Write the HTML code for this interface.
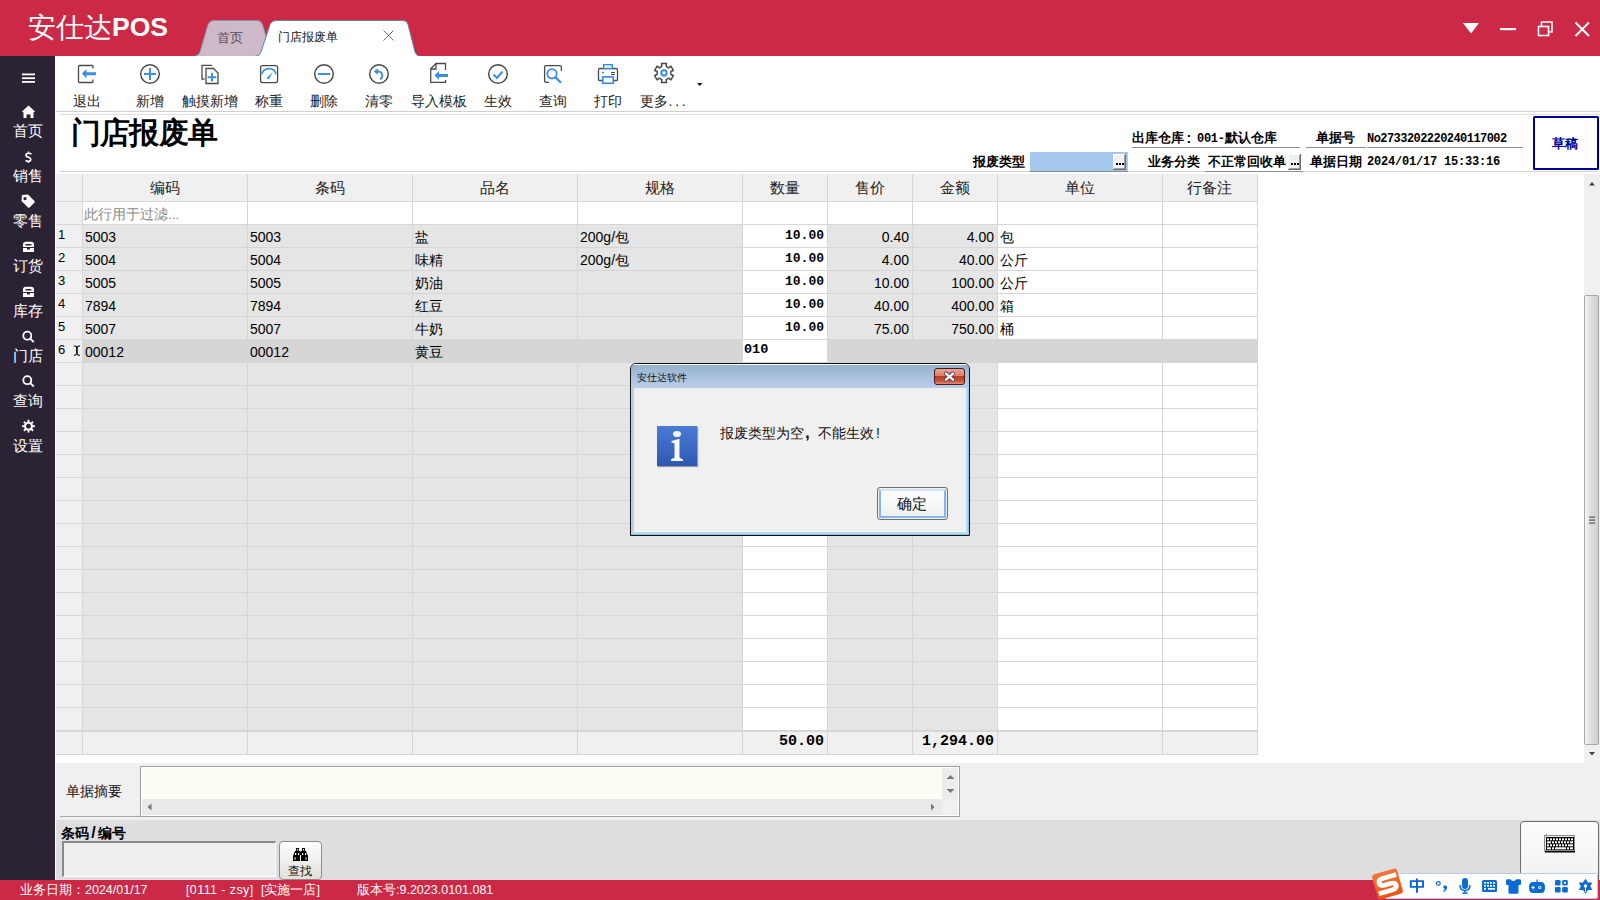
<!DOCTYPE html>
<html><head><meta charset="utf-8">
<style>
*{box-sizing:border-box;margin:0;padding:0}
html,body{width:1600px;height:900px;overflow:hidden;background:#fff;font-family:"Liberation Sans",sans-serif;color:#000}
div,span,svg{position:absolute}
b{font-weight:bold}
.t{white-space:nowrap;line-height:1}
.sl{left:0;width:55px;text-align:center;color:#fff;font-size:15px;white-space:nowrap;line-height:1}
.tl{font-size:14px;white-space:nowrap;line-height:1;color:#222}
.hf{font-size:13px;font-weight:bold;white-space:nowrap;line-height:1}
.mono{font-family:"Liberation Mono",monospace}
.cell{font-size:14px;line-height:1;white-space:nowrap}
</style></head><body>

<div style="left:0;top:0;width:1600px;height:56px;background:#cc2946"></div>
<div class="t" style="left:28px;top:14px;color:#fff;font-size:28px;font-family:'Liberation Serif',serif">安仕达</div>
<div class="t" style="left:112px;top:14px;color:#fff;font-size:26.5px;font-weight:bold">POS</div>
<svg style="left:0;top:0" width="600" height="56" viewBox="0 0 600 56">
<path d="M194,56.5 Q198.5,56 200,52 L208,24.5 Q209.5,20.5 214,20.5 L257,20.5 Q261.5,20.5 262.5,24.5 L272,56.5 Z" fill="#cdb9c8" stroke="#7f96b3" stroke-width="1"/>
<path d="M255,56.5 Q259.5,56 261,52 L270,24.5 Q271.5,20.5 276,20.5 L403,20.5 Q407,20.5 408,24.5 L415,52 Q416.5,56 420,56.5 Z" fill="#fff" stroke="#5f86a8" stroke-width="1"/>
<path d="M383.5,30.5 L393.5,40.5 M393.5,30.5 L383.5,40.5" stroke="#5a5a5a" stroke-width="0.9"/>
</svg>
<div class="t" style="left:217px;top:31px;font-size:13px;color:#5b4b57">首页</div>
<div class="t" style="left:278px;top:31px;font-size:12px;color:#111">门店报废单</div>
<svg style="left:1450px;top:10px" width="150" height="40" viewBox="1450 10 150 40">
<path d="M1463,23 L1479,23 L1471,33.5 Z" fill="#fff"/>
<rect x="1500" y="28" width="16" height="2.2" fill="#fff"/>
<rect x="1538.5" y="26.5" width="10" height="9" fill="none" stroke="#fff" stroke-width="1.6"/>
<path d="M1541.5,26 L1541.5,22 L1552,22 L1552,32 L1548.5,32" fill="none" stroke="#fff" stroke-width="1.6"/>
<path d="M1575.5,22.5 L1589,36 M1589,22.5 L1575.5,36" stroke="#fff" stroke-width="2"/>
</svg>
<div style="left:0;top:56px;width:55px;height:824px;background:#2b2334"></div>
<svg style="left:0;top:56px" width="55" height="400" viewBox="0 56 55 400">
<g fill="#fff">
<rect x="22" y="73.5" width="13" height="1.8"/><rect x="22" y="77.3" width="13" height="1.8"/><rect x="22" y="81" width="13" height="1.8"/>
<path d="M28.5,105.5 L35,111.5 L33.5,112.5 L33.5,118 L30.5,118 L30.5,114.5 L26.5,114.5 L26.5,118 L23.5,118 L23.5,112.5 L22,111.5 Z"/>
</g>
<g fill="none" stroke="#fff">
<path d="M31.5,154 Q28.5,152.5 26.5,154 Q25,156 28,157 Q31.5,158 30.5,160.5 Q28.5,162 25.5,160.5" stroke-width="1.7"/>
<path d="M28.5,151.5 L28.5,153 M28.5,161 L28.5,163" stroke-width="1.4"/>
</g>
<g fill="#fff">
<path d="M22,196.5 L28,196 L34.5,202.5 Q35,203.5 34.5,204 L29.5,209 Q28.5,209.5 28,209 L21.5,202.5 Z M25,198.5 A1.6,1.6 0 1 0 25.01,198.5 Z" fill-rule="evenodd" transform="translate(0,-1.5)"/>
</g>
<g fill="#fff">
<path d="M23,247 L23,244.5 Q23,241.8 26,241.8 L31,241.8 Q34,241.8 34,244.5 L34,247 Z M25.5,244 L25.5,245.5 L31.5,245.5 L31.5,244 Z" fill-rule="evenodd"/>
<path d="M23,248 L27,248 L27,249.5 L30,249.5 L30,248 L34,248 L34,252 L23,252 Z"/>
<path d="M23,292 L23,289.5 Q23,286.8 26,286.8 L31,286.8 Q34,286.8 34,289.5 L34,292 Z M25.5,289 L25.5,290.5 L31.5,290.5 L31.5,289 Z" fill-rule="evenodd"/>
<path d="M23,293 L27,293 L27,294.5 L30,294.5 L30,293 L34,293 L34,297 L23,297 Z"/>
</g>
<g fill="none" stroke="#fff" stroke-width="1.8">
<circle cx="27.3" cy="335.7" r="4"/><path d="M30.2,338.6 L33.8,342"/>
<circle cx="27.3" cy="380.2" r="4"/><path d="M30.2,383.1 L33.8,386.5"/>
</g>
</svg>
<svg style="left:0;top:400px" width="55" height="50" viewBox="0 400 55 50"><path d="M33.01,425.30 L34.92,425.18 L34.92,427.22 L33.01,427.10 L32.32,428.76 L33.76,430.02 L32.32,431.46 L31.06,430.02 L29.40,430.71 L29.52,432.62 L27.48,432.62 L27.60,430.71 L25.94,430.02 L24.68,431.46 L23.24,430.02 L24.68,428.76 L23.99,427.10 L22.08,427.22 L22.08,425.18 L23.99,425.30 L24.68,423.64 L23.24,422.38 L24.68,420.94 L25.94,422.38 L27.60,421.69 L27.48,419.78 L29.52,419.78 L29.40,421.69 L31.06,422.38 L32.32,420.94 L33.76,422.38 L32.32,423.64 Z M31,426.2 A2.5,2.5 0 1 0 31,426.21 Z" fill="#fff" fill-rule="evenodd"/></svg>
<div class="sl" style="top:123px">首页</div>
<div class="sl" style="top:168px">销售</div>
<div class="sl" style="top:213px">零售</div>
<div class="sl" style="top:258px">订货</div>
<div class="sl" style="top:303px">库存</div>
<div class="sl" style="top:348px">门店</div>
<div class="sl" style="top:393px">查询</div>
<div class="sl" style="top:438px">设置</div>
<div class="tl" style="left:87.1px;top:94px;transform:translateX(-50%)">退出</div>
<div class="tl" style="left:149.5px;top:94px;transform:translateX(-50%)">新增</div>
<div class="tl" style="left:209.7px;top:94px;transform:translateX(-50%)">触摸新增</div>
<div class="tl" style="left:268.7px;top:94px;transform:translateX(-50%)">称重</div>
<div class="tl" style="left:323.9px;top:94px;transform:translateX(-50%)">删除</div>
<div class="tl" style="left:379.0px;top:94px;transform:translateX(-50%)">清零</div>
<div class="tl" style="left:438.8px;top:94px;transform:translateX(-50%)">导入模板</div>
<div class="tl" style="left:498.0px;top:94px;transform:translateX(-50%)">生效</div>
<div class="tl" style="left:553.1px;top:94px;transform:translateX(-50%)">查询</div>
<div class="tl" style="left:608.0px;top:94px;transform:translateX(-50%)">打印</div>
<div class="tl" style="left:664.5px;top:94px;transform:translateX(-50%)">更多<span style="position:static;letter-spacing:2.8px">...</span></div>
<svg style="left:0;top:0" width="720" height="112" viewBox="0 0 720 112">
<g fill="none" stroke="#4a4a4a" stroke-width="1.3">
<!-- 退出 -->
<path d="M93,68.5 L93,66.5 Q93,65.5 92,65.5 L79.5,65.5 Q78.5,65.5 78.5,66.5 L78.5,81.5 Q78.5,82.5 79.5,82.5 L92,82.5 Q93,82.5 93,81.5 L93,79.5"/>
<!-- 新增 -->
<circle cx="150" cy="74" r="9.3" stroke-width="1.45"/>
<!-- 触摸新增 -->
<path d="M211.5,66 L211.5,65.3 L202,65.3 L202,79 L204.5,79"/>
<path d="M206,68.5 L213.5,68.5 L218,73 L218,83.5 L206,83.5 Z"/>
<!-- 称重 -->
<rect x="260.6" y="65.6" width="17" height="17" rx="2"/>
<!-- 删除 -->
<circle cx="324" cy="74" r="9.3" stroke-width="1.45"/>
<!-- 清零 -->
<circle cx="379" cy="74" r="9.3" stroke-width="1.45"/>
<!-- 导入模板 -->
<path d="M445.5,70 L445.5,63.5 L436,63.5 L430.7,68.8 L430.7,82.3 L445.5,82.3 L445.5,80"/>
<path d="M436,63.5 L436,69 L430.7,69" />
<!-- 生效 -->
<circle cx="498" cy="74" r="9.3" stroke-width="1.45"/>
<!-- 查询 -->
<path d="M561.4,71 L561.4,67 Q561.4,65.6 560,65.6 L546,65.6 Q544.6,65.6 544.6,67 L544.6,81 Q544.6,82.4 546,82.4 L549,82.4"/>
<!-- 打印 -->
<rect x="598.5" y="68.5" width="19" height="12" rx="1.2"/>
<path d="M611,72.5 L615,72.5 M611,74.5 L615,74.5" stroke-width="1"/>
<!-- gear -->
<path d="M661.84,66.34 L661.53,63.62 L666.47,63.62 L666.16,66.34 L668.68,67.80 L670.89,66.17 L673.36,70.45 L670.85,71.54 L670.85,74.46 L673.36,75.55 L670.89,79.83 L668.68,78.20 L666.16,79.66 L666.47,82.38 L661.53,82.38 L661.84,79.66 L659.32,78.20 L657.11,79.83 L654.64,75.55 L657.15,74.46 L657.15,71.54 L654.64,70.45 L657.11,66.17 L659.32,67.80 Z" stroke-width="1.5" stroke-linejoin="round"/>
</g>
<g fill="#3a8ee4" stroke="none">
<!-- 退出 arrow -->
<path d="M82,73.5 L86.5,69 L86.5,72.2 L96,72.2 L96,75.3 L86.5,75.3 L86.5,78.5 Z"/>
<!-- 新增 plus -->
<rect x="144" y="73" width="12" height="2"/><rect x="149" y="68" width="2" height="12"/>
<!-- 触摸新增 plus -->
<rect x="207.7" y="76.2" width="8.6" height="2"/><rect x="211" y="72.8" width="2" height="8.6"/>
<!-- 删除 minus -->
<rect x="318" y="73" width="12" height="2"/>
<!-- 导入模板 arrow -->
<path d="M434.5,75.3 L439,71 L439,74 L448,74 L448,77 L439,77 L439,80 Z"/>
<!-- 打印 papers -->
<rect x="603.7" y="64.7" width="8.6" height="3.8" fill="#fff" stroke="#3a8ee4" stroke-width="1.5"/>
<rect x="602.8" y="76.9" width="10.4" height="6.4" fill="#fff" stroke="#3a8ee4" stroke-width="1.7"/>
<path d="M602,72.5 L603,71.5 L604,72.5 L603,73.5 Z" fill="#4a4a4a"/>
</g>
<g fill="none" stroke="#3a8ee4">
<!-- 称重 gauge -->
<path d="M261.9,74.2 A7.3,7.3 0 0 1 276.1,74.2" stroke-width="1.6"/>
<!-- 清零 undo -->
<path d="M376.5,71.5 Q382,71 382.3,75.5 Q382.3,77.5 380.3,79.5" stroke-width="1.9"/>
<!-- 生效 check -->
<path d="M493.5,74.5 L497,78 L502.5,71.5" stroke-width="2"/>
<!-- 查询 magnifier -->
<circle cx="552" cy="73.8" r="4.7" stroke-width="1.8"/>
<path d="M555.5,77.3 L561,82.8" stroke-width="2.2"/>
<!-- gear center -->
<circle cx="664" cy="73" r="2.7" stroke-width="2"/>
</g>
<path d="M373.8,71.5 L377.8,68.2 L377.8,74.8 Z" fill="#3a8ee4"/>
<path d="M266.6,78.2 L268.8,79.4 L272.8,71.8 Z" fill="#3a8ee4"/>
<path d="M697,83 L702.5,83 L699.75,86 Z" fill="#111"/>
</svg>

<div style="left:56px;top:111px;width:1544px;height:1px;background:#cfcfcf"></div>
<div style="left:59px;top:114px;width:1541px;height:1px;background:#dedede"></div>
<div class="t" style="left:70.5px;top:117.5px;font-size:30px;letter-spacing:-0.6px;font-weight:bold;font-family:'Liberation Serif',serif">门店报废单</div>
<div style="left:59px;top:171px;width:1539px;height:1px;background:#d4d4d4"></div>
<div class="hf" style="left:1132px;top:131px">出库仓库</div>
<div class="hf" style="left:1186.5px;top:131px;font-size:14px">:</div>
<div class="hf mono" style="left:1197px;top:133px;font-size:12px;letter-spacing:-0.3px">001-</div>
<div class="hf" style="left:1225px;top:131px">默认仓库</div>
<div style="left:1132px;top:147px;width:168px;height:1px;background:#8c8c8c"></div>
<div class="hf" style="left:1316px;top:131px">单据号</div>
<div style="left:1306px;top:147px;width:60px;height:1px;background:#8c8c8c"></div>
<div class="hf mono" style="left:1367px;top:133px;font-size:12px;letter-spacing:-0.55px">No2733202220240117002</div>
<div style="left:1367px;top:147px;width:156px;height:1px;background:#8c8c8c"></div>
<div class="hf" style="left:973px;top:155px">报废类型</div>
<div style="left:1030px;top:152px;width:98px;height:19px;background:#a7c8ee"></div>
<svg style="left:1113px;top:154px" width="13" height="16" viewBox="0 0 13 16"><rect x="0" y="0" width="13" height="16" fill="#6a6a6a"/><rect x="0" y="0" width="12" height="15" fill="#fff"/><rect x="1" y="1" width="11" height="14" fill="#a0a0a0"/><rect x="1" y="1" width="10" height="13" fill="#f0f0f0"/><rect x="3" y="9" width="2" height="2" fill="#000"/><rect x="6" y="9" width="2" height="2" fill="#000"/><rect x="9" y="9" width="2" height="2" fill="#000"/></svg>
<div style="left:1030px;top:171px;width:98px;height:1px;background:#8a8a8a"></div>
<div class="hf" style="left:1148px;top:155px">业务分类</div>
<div class="hf" style="left:1208px;top:155px">不正常回收单</div>
<div style="left:1205px;top:171px;width:98px;height:1px;background:#8c8c8c"></div>
<svg style="left:1288px;top:154px" width="13" height="16" viewBox="0 0 13 16"><rect x="0" y="0" width="13" height="16" fill="#6a6a6a"/><rect x="0" y="0" width="12" height="15" fill="#fff"/><rect x="1" y="1" width="11" height="14" fill="#a0a0a0"/><rect x="1" y="1" width="10" height="13" fill="#f0f0f0"/><rect x="3" y="9" width="2" height="2" fill="#000"/><rect x="6" y="9" width="2" height="2" fill="#000"/><rect x="9" y="9" width="2" height="2" fill="#000"/></svg>
<div class="hf" style="left:1310px;top:155px">单据日期</div>
<div class="hf mono" style="left:1367px;top:156px;font-size:12px;letter-spacing:-0.2px">2024/01/17 15:33:16</div>
<div style="left:1533px;top:116px;width:66px;height:54px;border:2.5px solid #00009a;border-radius:1.5px"></div>
<div class="t" style="left:1552px;top:137px;font-size:13px;font-weight:bold;color:#00009a">草稿</div>
<div style="left:56px;top:174px;width:26px;height:27px;background:#f0f0f0"></div>
<div style="left:82px;top:174px;width:165px;height:27px;background:#f0f0f0"></div>
<div style="left:247px;top:174px;width:165px;height:27px;background:#f0f0f0"></div>
<div style="left:412px;top:174px;width:165px;height:27px;background:#f0f0f0"></div>
<div style="left:577px;top:174px;width:165px;height:27px;background:#f0f0f0"></div>
<div style="left:742px;top:174px;width:85px;height:27px;background:#f0f0f0"></div>
<div style="left:827px;top:174px;width:85px;height:27px;background:#f0f0f0"></div>
<div style="left:912px;top:174px;width:85px;height:27px;background:#f0f0f0"></div>
<div style="left:997px;top:174px;width:165px;height:27px;background:#f0f0f0"></div>
<div style="left:1162px;top:174px;width:95px;height:27px;background:#f0f0f0"></div>
<div style="left:56px;top:202px;width:26px;height:22px;background:#f0f0f0"></div>
<div style="left:83px;top:202px;width:1174px;height:22px;background:#fff"></div>
<div style="left:56px;top:225px;width:26px;height:22px;background:#f0f0f0"></div>
<div style="left:83px;top:225px;width:164px;height:22px;background:#e5e5e5"></div>
<div style="left:248px;top:225px;width:164px;height:22px;background:#e5e5e5"></div>
<div style="left:413px;top:225px;width:164px;height:22px;background:#e5e5e5"></div>
<div style="left:578px;top:225px;width:164px;height:22px;background:#e5e5e5"></div>
<div style="left:743px;top:225px;width:84px;height:22px;background:#fff"></div>
<div style="left:828px;top:225px;width:84px;height:22px;background:#e5e5e5"></div>
<div style="left:913px;top:225px;width:84px;height:22px;background:#e5e5e5"></div>
<div style="left:998px;top:225px;width:164px;height:22px;background:#fff"></div>
<div style="left:1163px;top:225px;width:94px;height:22px;background:#fff"></div>
<div style="left:56px;top:248px;width:26px;height:22px;background:#f0f0f0"></div>
<div style="left:83px;top:248px;width:164px;height:22px;background:#e5e5e5"></div>
<div style="left:248px;top:248px;width:164px;height:22px;background:#e5e5e5"></div>
<div style="left:413px;top:248px;width:164px;height:22px;background:#e5e5e5"></div>
<div style="left:578px;top:248px;width:164px;height:22px;background:#e5e5e5"></div>
<div style="left:743px;top:248px;width:84px;height:22px;background:#fff"></div>
<div style="left:828px;top:248px;width:84px;height:22px;background:#e5e5e5"></div>
<div style="left:913px;top:248px;width:84px;height:22px;background:#e5e5e5"></div>
<div style="left:998px;top:248px;width:164px;height:22px;background:#fff"></div>
<div style="left:1163px;top:248px;width:94px;height:22px;background:#fff"></div>
<div style="left:56px;top:271px;width:26px;height:22px;background:#f0f0f0"></div>
<div style="left:83px;top:271px;width:164px;height:22px;background:#e5e5e5"></div>
<div style="left:248px;top:271px;width:164px;height:22px;background:#e5e5e5"></div>
<div style="left:413px;top:271px;width:164px;height:22px;background:#e5e5e5"></div>
<div style="left:578px;top:271px;width:164px;height:22px;background:#e5e5e5"></div>
<div style="left:743px;top:271px;width:84px;height:22px;background:#fff"></div>
<div style="left:828px;top:271px;width:84px;height:22px;background:#e5e5e5"></div>
<div style="left:913px;top:271px;width:84px;height:22px;background:#e5e5e5"></div>
<div style="left:998px;top:271px;width:164px;height:22px;background:#fff"></div>
<div style="left:1163px;top:271px;width:94px;height:22px;background:#fff"></div>
<div style="left:56px;top:294px;width:26px;height:22px;background:#f0f0f0"></div>
<div style="left:83px;top:294px;width:164px;height:22px;background:#e5e5e5"></div>
<div style="left:248px;top:294px;width:164px;height:22px;background:#e5e5e5"></div>
<div style="left:413px;top:294px;width:164px;height:22px;background:#e5e5e5"></div>
<div style="left:578px;top:294px;width:164px;height:22px;background:#e5e5e5"></div>
<div style="left:743px;top:294px;width:84px;height:22px;background:#fff"></div>
<div style="left:828px;top:294px;width:84px;height:22px;background:#e5e5e5"></div>
<div style="left:913px;top:294px;width:84px;height:22px;background:#e5e5e5"></div>
<div style="left:998px;top:294px;width:164px;height:22px;background:#fff"></div>
<div style="left:1163px;top:294px;width:94px;height:22px;background:#fff"></div>
<div style="left:56px;top:317px;width:26px;height:22px;background:#f0f0f0"></div>
<div style="left:83px;top:317px;width:164px;height:22px;background:#e5e5e5"></div>
<div style="left:248px;top:317px;width:164px;height:22px;background:#e5e5e5"></div>
<div style="left:413px;top:317px;width:164px;height:22px;background:#e5e5e5"></div>
<div style="left:578px;top:317px;width:164px;height:22px;background:#e5e5e5"></div>
<div style="left:743px;top:317px;width:84px;height:22px;background:#fff"></div>
<div style="left:828px;top:317px;width:84px;height:22px;background:#e5e5e5"></div>
<div style="left:913px;top:317px;width:84px;height:22px;background:#e5e5e5"></div>
<div style="left:998px;top:317px;width:164px;height:22px;background:#fff"></div>
<div style="left:1163px;top:317px;width:94px;height:22px;background:#fff"></div>
<div style="left:56px;top:340px;width:26px;height:22px;background:#f0f0f0"></div>
<div style="left:83px;top:340px;width:164px;height:22px;background:#d5d5d5"></div>
<div style="left:248px;top:340px;width:164px;height:22px;background:#d5d5d5"></div>
<div style="left:413px;top:340px;width:164px;height:22px;background:#d5d5d5"></div>
<div style="left:578px;top:340px;width:164px;height:22px;background:#d5d5d5"></div>
<div style="left:743px;top:340px;width:84px;height:22px;background:#fff"></div>
<div style="left:828px;top:340px;width:84px;height:22px;background:#d5d5d5"></div>
<div style="left:913px;top:340px;width:84px;height:22px;background:#d5d5d5"></div>
<div style="left:998px;top:340px;width:164px;height:22px;background:#d5d5d5"></div>
<div style="left:1163px;top:340px;width:94px;height:22px;background:#d5d5d5"></div>
<div style="left:56px;top:363px;width:26px;height:22px;background:#f0f0f0"></div>
<div style="left:83px;top:363px;width:164px;height:22px;background:#e5e5e5"></div>
<div style="left:248px;top:363px;width:164px;height:22px;background:#e5e5e5"></div>
<div style="left:413px;top:363px;width:164px;height:22px;background:#e5e5e5"></div>
<div style="left:578px;top:363px;width:164px;height:22px;background:#e5e5e5"></div>
<div style="left:743px;top:363px;width:84px;height:22px;background:#fff"></div>
<div style="left:828px;top:363px;width:84px;height:22px;background:#e5e5e5"></div>
<div style="left:913px;top:363px;width:84px;height:22px;background:#e5e5e5"></div>
<div style="left:998px;top:363px;width:164px;height:22px;background:#fff"></div>
<div style="left:1163px;top:363px;width:94px;height:22px;background:#fff"></div>
<div style="left:56px;top:386px;width:26px;height:22px;background:#f0f0f0"></div>
<div style="left:83px;top:386px;width:164px;height:22px;background:#e5e5e5"></div>
<div style="left:248px;top:386px;width:164px;height:22px;background:#e5e5e5"></div>
<div style="left:413px;top:386px;width:164px;height:22px;background:#e5e5e5"></div>
<div style="left:578px;top:386px;width:164px;height:22px;background:#e5e5e5"></div>
<div style="left:743px;top:386px;width:84px;height:22px;background:#fff"></div>
<div style="left:828px;top:386px;width:84px;height:22px;background:#e5e5e5"></div>
<div style="left:913px;top:386px;width:84px;height:22px;background:#e5e5e5"></div>
<div style="left:998px;top:386px;width:164px;height:22px;background:#fff"></div>
<div style="left:1163px;top:386px;width:94px;height:22px;background:#fff"></div>
<div style="left:56px;top:409px;width:26px;height:22px;background:#f0f0f0"></div>
<div style="left:83px;top:409px;width:164px;height:22px;background:#e5e5e5"></div>
<div style="left:248px;top:409px;width:164px;height:22px;background:#e5e5e5"></div>
<div style="left:413px;top:409px;width:164px;height:22px;background:#e5e5e5"></div>
<div style="left:578px;top:409px;width:164px;height:22px;background:#e5e5e5"></div>
<div style="left:743px;top:409px;width:84px;height:22px;background:#fff"></div>
<div style="left:828px;top:409px;width:84px;height:22px;background:#e5e5e5"></div>
<div style="left:913px;top:409px;width:84px;height:22px;background:#e5e5e5"></div>
<div style="left:998px;top:409px;width:164px;height:22px;background:#fff"></div>
<div style="left:1163px;top:409px;width:94px;height:22px;background:#fff"></div>
<div style="left:56px;top:432px;width:26px;height:22px;background:#f0f0f0"></div>
<div style="left:83px;top:432px;width:164px;height:22px;background:#e5e5e5"></div>
<div style="left:248px;top:432px;width:164px;height:22px;background:#e5e5e5"></div>
<div style="left:413px;top:432px;width:164px;height:22px;background:#e5e5e5"></div>
<div style="left:578px;top:432px;width:164px;height:22px;background:#e5e5e5"></div>
<div style="left:743px;top:432px;width:84px;height:22px;background:#fff"></div>
<div style="left:828px;top:432px;width:84px;height:22px;background:#e5e5e5"></div>
<div style="left:913px;top:432px;width:84px;height:22px;background:#e5e5e5"></div>
<div style="left:998px;top:432px;width:164px;height:22px;background:#fff"></div>
<div style="left:1163px;top:432px;width:94px;height:22px;background:#fff"></div>
<div style="left:56px;top:455px;width:26px;height:22px;background:#f0f0f0"></div>
<div style="left:83px;top:455px;width:164px;height:22px;background:#e5e5e5"></div>
<div style="left:248px;top:455px;width:164px;height:22px;background:#e5e5e5"></div>
<div style="left:413px;top:455px;width:164px;height:22px;background:#e5e5e5"></div>
<div style="left:578px;top:455px;width:164px;height:22px;background:#e5e5e5"></div>
<div style="left:743px;top:455px;width:84px;height:22px;background:#fff"></div>
<div style="left:828px;top:455px;width:84px;height:22px;background:#e5e5e5"></div>
<div style="left:913px;top:455px;width:84px;height:22px;background:#e5e5e5"></div>
<div style="left:998px;top:455px;width:164px;height:22px;background:#fff"></div>
<div style="left:1163px;top:455px;width:94px;height:22px;background:#fff"></div>
<div style="left:56px;top:478px;width:26px;height:22px;background:#f0f0f0"></div>
<div style="left:83px;top:478px;width:164px;height:22px;background:#e5e5e5"></div>
<div style="left:248px;top:478px;width:164px;height:22px;background:#e5e5e5"></div>
<div style="left:413px;top:478px;width:164px;height:22px;background:#e5e5e5"></div>
<div style="left:578px;top:478px;width:164px;height:22px;background:#e5e5e5"></div>
<div style="left:743px;top:478px;width:84px;height:22px;background:#fff"></div>
<div style="left:828px;top:478px;width:84px;height:22px;background:#e5e5e5"></div>
<div style="left:913px;top:478px;width:84px;height:22px;background:#e5e5e5"></div>
<div style="left:998px;top:478px;width:164px;height:22px;background:#fff"></div>
<div style="left:1163px;top:478px;width:94px;height:22px;background:#fff"></div>
<div style="left:56px;top:501px;width:26px;height:22px;background:#f0f0f0"></div>
<div style="left:83px;top:501px;width:164px;height:22px;background:#e5e5e5"></div>
<div style="left:248px;top:501px;width:164px;height:22px;background:#e5e5e5"></div>
<div style="left:413px;top:501px;width:164px;height:22px;background:#e5e5e5"></div>
<div style="left:578px;top:501px;width:164px;height:22px;background:#e5e5e5"></div>
<div style="left:743px;top:501px;width:84px;height:22px;background:#fff"></div>
<div style="left:828px;top:501px;width:84px;height:22px;background:#e5e5e5"></div>
<div style="left:913px;top:501px;width:84px;height:22px;background:#e5e5e5"></div>
<div style="left:998px;top:501px;width:164px;height:22px;background:#fff"></div>
<div style="left:1163px;top:501px;width:94px;height:22px;background:#fff"></div>
<div style="left:56px;top:524px;width:26px;height:22px;background:#f0f0f0"></div>
<div style="left:83px;top:524px;width:164px;height:22px;background:#e5e5e5"></div>
<div style="left:248px;top:524px;width:164px;height:22px;background:#e5e5e5"></div>
<div style="left:413px;top:524px;width:164px;height:22px;background:#e5e5e5"></div>
<div style="left:578px;top:524px;width:164px;height:22px;background:#e5e5e5"></div>
<div style="left:743px;top:524px;width:84px;height:22px;background:#fff"></div>
<div style="left:828px;top:524px;width:84px;height:22px;background:#e5e5e5"></div>
<div style="left:913px;top:524px;width:84px;height:22px;background:#e5e5e5"></div>
<div style="left:998px;top:524px;width:164px;height:22px;background:#fff"></div>
<div style="left:1163px;top:524px;width:94px;height:22px;background:#fff"></div>
<div style="left:56px;top:547px;width:26px;height:22px;background:#f0f0f0"></div>
<div style="left:83px;top:547px;width:164px;height:22px;background:#e5e5e5"></div>
<div style="left:248px;top:547px;width:164px;height:22px;background:#e5e5e5"></div>
<div style="left:413px;top:547px;width:164px;height:22px;background:#e5e5e5"></div>
<div style="left:578px;top:547px;width:164px;height:22px;background:#e5e5e5"></div>
<div style="left:743px;top:547px;width:84px;height:22px;background:#fff"></div>
<div style="left:828px;top:547px;width:84px;height:22px;background:#e5e5e5"></div>
<div style="left:913px;top:547px;width:84px;height:22px;background:#e5e5e5"></div>
<div style="left:998px;top:547px;width:164px;height:22px;background:#fff"></div>
<div style="left:1163px;top:547px;width:94px;height:22px;background:#fff"></div>
<div style="left:56px;top:570px;width:26px;height:22px;background:#f0f0f0"></div>
<div style="left:83px;top:570px;width:164px;height:22px;background:#e5e5e5"></div>
<div style="left:248px;top:570px;width:164px;height:22px;background:#e5e5e5"></div>
<div style="left:413px;top:570px;width:164px;height:22px;background:#e5e5e5"></div>
<div style="left:578px;top:570px;width:164px;height:22px;background:#e5e5e5"></div>
<div style="left:743px;top:570px;width:84px;height:22px;background:#fff"></div>
<div style="left:828px;top:570px;width:84px;height:22px;background:#e5e5e5"></div>
<div style="left:913px;top:570px;width:84px;height:22px;background:#e5e5e5"></div>
<div style="left:998px;top:570px;width:164px;height:22px;background:#fff"></div>
<div style="left:1163px;top:570px;width:94px;height:22px;background:#fff"></div>
<div style="left:56px;top:593px;width:26px;height:22px;background:#f0f0f0"></div>
<div style="left:83px;top:593px;width:164px;height:22px;background:#e5e5e5"></div>
<div style="left:248px;top:593px;width:164px;height:22px;background:#e5e5e5"></div>
<div style="left:413px;top:593px;width:164px;height:22px;background:#e5e5e5"></div>
<div style="left:578px;top:593px;width:164px;height:22px;background:#e5e5e5"></div>
<div style="left:743px;top:593px;width:84px;height:22px;background:#fff"></div>
<div style="left:828px;top:593px;width:84px;height:22px;background:#e5e5e5"></div>
<div style="left:913px;top:593px;width:84px;height:22px;background:#e5e5e5"></div>
<div style="left:998px;top:593px;width:164px;height:22px;background:#fff"></div>
<div style="left:1163px;top:593px;width:94px;height:22px;background:#fff"></div>
<div style="left:56px;top:616px;width:26px;height:22px;background:#f0f0f0"></div>
<div style="left:83px;top:616px;width:164px;height:22px;background:#e5e5e5"></div>
<div style="left:248px;top:616px;width:164px;height:22px;background:#e5e5e5"></div>
<div style="left:413px;top:616px;width:164px;height:22px;background:#e5e5e5"></div>
<div style="left:578px;top:616px;width:164px;height:22px;background:#e5e5e5"></div>
<div style="left:743px;top:616px;width:84px;height:22px;background:#fff"></div>
<div style="left:828px;top:616px;width:84px;height:22px;background:#e5e5e5"></div>
<div style="left:913px;top:616px;width:84px;height:22px;background:#e5e5e5"></div>
<div style="left:998px;top:616px;width:164px;height:22px;background:#fff"></div>
<div style="left:1163px;top:616px;width:94px;height:22px;background:#fff"></div>
<div style="left:56px;top:639px;width:26px;height:22px;background:#f0f0f0"></div>
<div style="left:83px;top:639px;width:164px;height:22px;background:#e5e5e5"></div>
<div style="left:248px;top:639px;width:164px;height:22px;background:#e5e5e5"></div>
<div style="left:413px;top:639px;width:164px;height:22px;background:#e5e5e5"></div>
<div style="left:578px;top:639px;width:164px;height:22px;background:#e5e5e5"></div>
<div style="left:743px;top:639px;width:84px;height:22px;background:#fff"></div>
<div style="left:828px;top:639px;width:84px;height:22px;background:#e5e5e5"></div>
<div style="left:913px;top:639px;width:84px;height:22px;background:#e5e5e5"></div>
<div style="left:998px;top:639px;width:164px;height:22px;background:#fff"></div>
<div style="left:1163px;top:639px;width:94px;height:22px;background:#fff"></div>
<div style="left:56px;top:662px;width:26px;height:22px;background:#f0f0f0"></div>
<div style="left:83px;top:662px;width:164px;height:22px;background:#e5e5e5"></div>
<div style="left:248px;top:662px;width:164px;height:22px;background:#e5e5e5"></div>
<div style="left:413px;top:662px;width:164px;height:22px;background:#e5e5e5"></div>
<div style="left:578px;top:662px;width:164px;height:22px;background:#e5e5e5"></div>
<div style="left:743px;top:662px;width:84px;height:22px;background:#fff"></div>
<div style="left:828px;top:662px;width:84px;height:22px;background:#e5e5e5"></div>
<div style="left:913px;top:662px;width:84px;height:22px;background:#e5e5e5"></div>
<div style="left:998px;top:662px;width:164px;height:22px;background:#fff"></div>
<div style="left:1163px;top:662px;width:94px;height:22px;background:#fff"></div>
<div style="left:56px;top:685px;width:26px;height:22px;background:#f0f0f0"></div>
<div style="left:83px;top:685px;width:164px;height:22px;background:#e5e5e5"></div>
<div style="left:248px;top:685px;width:164px;height:22px;background:#e5e5e5"></div>
<div style="left:413px;top:685px;width:164px;height:22px;background:#e5e5e5"></div>
<div style="left:578px;top:685px;width:164px;height:22px;background:#e5e5e5"></div>
<div style="left:743px;top:685px;width:84px;height:22px;background:#fff"></div>
<div style="left:828px;top:685px;width:84px;height:22px;background:#e5e5e5"></div>
<div style="left:913px;top:685px;width:84px;height:22px;background:#e5e5e5"></div>
<div style="left:998px;top:685px;width:164px;height:22px;background:#fff"></div>
<div style="left:1163px;top:685px;width:94px;height:22px;background:#fff"></div>
<div style="left:56px;top:708px;width:26px;height:22px;background:#f0f0f0"></div>
<div style="left:83px;top:708px;width:164px;height:22px;background:#e5e5e5"></div>
<div style="left:248px;top:708px;width:164px;height:22px;background:#e5e5e5"></div>
<div style="left:413px;top:708px;width:164px;height:22px;background:#e5e5e5"></div>
<div style="left:578px;top:708px;width:164px;height:22px;background:#e5e5e5"></div>
<div style="left:743px;top:708px;width:84px;height:22px;background:#fff"></div>
<div style="left:828px;top:708px;width:84px;height:22px;background:#e5e5e5"></div>
<div style="left:913px;top:708px;width:84px;height:22px;background:#e5e5e5"></div>
<div style="left:998px;top:708px;width:164px;height:22px;background:#fff"></div>
<div style="left:1163px;top:708px;width:94px;height:22px;background:#fff"></div>
<div style="left:56px;top:732px;width:1201px;height:22px;background:#f0f0f0"></div>
<svg style="left:0;top:0" width="1600" height="900" viewBox="0 0 1600 900"><g fill="#d6d6d6"><rect x="82" y="174" width="1" height="581"/><rect x="247" y="174" width="1" height="581"/><rect x="412" y="174" width="1" height="581"/><rect x="577" y="174" width="1" height="581"/><rect x="742" y="174" width="1" height="581"/><rect x="827" y="174" width="1" height="581"/><rect x="912" y="174" width="1" height="581"/><rect x="997" y="174" width="1" height="581"/><rect x="1162" y="174" width="1" height="581"/><rect x="1257" y="174" width="1" height="581"/><rect x="56" y="201" width="1202" height="1"/><rect x="56" y="224" width="1202" height="1"/><rect x="56" y="247" width="1202" height="1"/><rect x="56" y="270" width="1202" height="1"/><rect x="56" y="293" width="1202" height="1"/><rect x="56" y="316" width="1202" height="1"/><rect x="56" y="339" width="1202" height="1"/><rect x="56" y="362" width="1202" height="1"/><rect x="56" y="385" width="1202" height="1"/><rect x="56" y="408" width="1202" height="1"/><rect x="56" y="431" width="1202" height="1"/><rect x="56" y="454" width="1202" height="1"/><rect x="56" y="477" width="1202" height="1"/><rect x="56" y="500" width="1202" height="1"/><rect x="56" y="523" width="1202" height="1"/><rect x="56" y="546" width="1202" height="1"/><rect x="56" y="569" width="1202" height="1"/><rect x="56" y="592" width="1202" height="1"/><rect x="56" y="615" width="1202" height="1"/><rect x="56" y="638" width="1202" height="1"/><rect x="56" y="661" width="1202" height="1"/><rect x="56" y="684" width="1202" height="1"/><rect x="56" y="707" width="1202" height="1"/><rect x="56" y="730" width="1202" height="1"/><rect x="56" y="731" width="1202" height="1"/><rect x="56" y="754" width="1202" height="1"/></g></svg>
<div class="t" style="left:82px;top:181px;width:165px;text-align:center;font-size:14.5px;color:#222">编码</div>
<div class="t" style="left:247px;top:181px;width:165px;text-align:center;font-size:14.5px;color:#222">条码</div>
<div class="t" style="left:412px;top:181px;width:165px;text-align:center;font-size:14.5px;color:#222">品名</div>
<div class="t" style="left:577px;top:181px;width:165px;text-align:center;font-size:14.5px;color:#222">规格</div>
<div class="t" style="left:742px;top:181px;width:85px;text-align:center;font-size:14.5px;color:#222">数量</div>
<div class="t" style="left:827px;top:181px;width:85px;text-align:center;font-size:14.5px;color:#222">售价</div>
<div class="t" style="left:912px;top:181px;width:85px;text-align:center;font-size:14.5px;color:#222">金额</div>
<div class="t" style="left:997px;top:181px;width:165px;text-align:center;font-size:14.5px;color:#222">单位</div>
<div class="t" style="left:1162px;top:181px;width:95px;text-align:center;font-size:14.5px;color:#222">行备注</div>
<div class="t" style="left:84px;top:208px;font-size:13.5px;color:#8a8a8a">此行用于过滤...</div>
<div class="t" style="left:58px;top:228px;font-size:13px">1</div>
<div class="cell" style="left:85px;top:230px">5003</div>
<div class="cell" style="left:250px;top:230px">5003</div>
<div class="cell" style="left:415px;top:230px">盐</div>
<div class="cell" style="left:580px;top:230px">200g/包</div>
<div class="t mono" style="left:742px;width:82px;text-align:right;top:229px;font-size:13px;font-weight:bold">10.00</div>
<div class="cell" style="left:827px;width:82px;text-align:right;top:230px">0.40</div>
<div class="cell" style="left:912px;width:82px;text-align:right;top:230px">4.00</div>
<div class="cell" style="left:1000px;top:230px">包</div>
<div class="t" style="left:58px;top:251px;font-size:13px">2</div>
<div class="cell" style="left:85px;top:253px">5004</div>
<div class="cell" style="left:250px;top:253px">5004</div>
<div class="cell" style="left:415px;top:253px">味精</div>
<div class="cell" style="left:580px;top:253px">200g/包</div>
<div class="t mono" style="left:742px;width:82px;text-align:right;top:252px;font-size:13px;font-weight:bold">10.00</div>
<div class="cell" style="left:827px;width:82px;text-align:right;top:253px">4.00</div>
<div class="cell" style="left:912px;width:82px;text-align:right;top:253px">40.00</div>
<div class="cell" style="left:1000px;top:253px">公斤</div>
<div class="t" style="left:58px;top:274px;font-size:13px">3</div>
<div class="cell" style="left:85px;top:276px">5005</div>
<div class="cell" style="left:250px;top:276px">5005</div>
<div class="cell" style="left:415px;top:276px">奶油</div>
<div class="t mono" style="left:742px;width:82px;text-align:right;top:275px;font-size:13px;font-weight:bold">10.00</div>
<div class="cell" style="left:827px;width:82px;text-align:right;top:276px">10.00</div>
<div class="cell" style="left:912px;width:82px;text-align:right;top:276px">100.00</div>
<div class="cell" style="left:1000px;top:276px">公斤</div>
<div class="t" style="left:58px;top:297px;font-size:13px">4</div>
<div class="cell" style="left:85px;top:299px">7894</div>
<div class="cell" style="left:250px;top:299px">7894</div>
<div class="cell" style="left:415px;top:299px">红豆</div>
<div class="t mono" style="left:742px;width:82px;text-align:right;top:298px;font-size:13px;font-weight:bold">10.00</div>
<div class="cell" style="left:827px;width:82px;text-align:right;top:299px">40.00</div>
<div class="cell" style="left:912px;width:82px;text-align:right;top:299px">400.00</div>
<div class="cell" style="left:1000px;top:299px">箱</div>
<div class="t" style="left:58px;top:320px;font-size:13px">5</div>
<div class="cell" style="left:85px;top:322px">5007</div>
<div class="cell" style="left:250px;top:322px">5007</div>
<div class="cell" style="left:415px;top:322px">牛奶</div>
<div class="t mono" style="left:742px;width:82px;text-align:right;top:321px;font-size:13px;font-weight:bold">10.00</div>
<div class="cell" style="left:827px;width:82px;text-align:right;top:322px">75.00</div>
<div class="cell" style="left:912px;width:82px;text-align:right;top:322px">750.00</div>
<div class="cell" style="left:1000px;top:322px">桶</div>
<div class="t" style="left:58px;top:343px;font-size:13px">6</div>
<div class="cell" style="left:85px;top:345px">00012</div>
<div class="cell" style="left:250px;top:345px">00012</div>
<div class="cell" style="left:415px;top:345px">黄豆</div>
<div class="t mono" style="left:744px;top:343px;font-size:13.5px;font-weight:bold">010</div>
<svg style="left:72px;top:343px" width="10" height="15" viewBox="72 343 10 15"><path d="M73.8,345.5 L75.3,345.5 L76.9,346.6 L78.5,345.5 L80,345.5 L80,346.5 L78.6,346.5 L77.7,347.5 L77.7,353.7 L78.6,354.7 L80,354.7 L80,355.7 L78.5,355.7 L76.9,354.6 L75.3,355.7 L73.8,355.7 L73.8,354.7 L75.2,354.7 L76.1,353.7 L76.1,347.5 L75.2,346.5 L73.8,346.5 Z" fill="#000"/></svg>
<div class="t mono" style="left:700px;width:124px;text-align:right;top:734px;font-size:15px;font-weight:bold">50.00</div>
<div class="t mono" style="left:870px;width:124px;text-align:right;top:734px;font-size:15px;font-weight:bold">1,294.00</div>
<div style="left:1584px;top:174px;width:16px;height:589px;background:#f0f0f0"></div>
<svg style="left:1584px;top:174px" width="16" height="589" viewBox="0 0 16 589"><path d="M5,11.5 L8,8 L11,11.5 Z" fill="#404040"/><path d="M5,578 L8,581.5 L11,578 Z" fill="#404040"/></svg>
<div style="left:1584px;top:295px;width:15px;height:450px;border:1px solid #a8a8a8;border-radius:2px;background:linear-gradient(to right,#f4f4f4,#dcdcdc 50%,#cfcfcf)"></div>
<svg style="left:1584px;top:510px" width="16" height="16" viewBox="0 0 16 16"><g fill="#555"><rect x="5" y="6.5" width="6" height="1.2"/><rect x="5" y="9.5" width="6" height="1.2"/><rect x="5" y="12.5" width="6" height="1.2"/></g></svg>
<div style="left:56px;top:763px;width:1544px;height:57px;background:#f0f0f0"></div>
<div style="left:56px;top:820px;width:1544px;height:60px;background:#dedee0"></div>
<div style="left:60px;top:816px;width:900px;height:1px;background:#a9a9a9"></div>
<div class="t" style="left:66px;top:784px;font-size:14px;color:#111">单据摘要</div>
<div style="left:140px;top:766px;width:820px;height:51px;border:1px solid #a0a0a0;background:#fff"></div>
<div style="left:142px;top:768px;width:800px;height:31px;background:#fdfdf6"></div>
<div style="left:942px;top:768px;width:16px;height:31px;background:#ececec"></div>
<div style="left:142px;top:799px;width:800px;height:16px;background:#eaeaea"></div>
<div style="left:942px;top:799px;width:16px;height:16px;background:#f0f0f0"></div>
<svg style="left:140px;top:766px" width="820" height="51" viewBox="140 766 820 51"><g fill="#777"><path d="M147.5,807 L151.5,803.5 L151.5,810.5 Z"/><path d="M931,803.5 L931,810.5 L934.5,807 Z"/><path d="M946.5,779 L950.5,775 L954.5,779 Z"/><path d="M946.5,789 L950.5,793 L954.5,789 Z"/></g></svg>
<div class="hf" style="left:61px;top:825px;font-size:14px">条码<span style="position:static;display:inline-block;width:9px;text-align:center;font-size:16px">/</span>编号</div>
<div style="left:62px;top:841px;width:214px;height:36px;background:#eeeeee;border-top:2px solid #8a8a8a;border-left:2px solid #8a8a8a;border-bottom:1px solid #fff;border-right:1px solid #fff"></div>
<div style="left:279px;top:841px;width:43px;height:39px;border:1px solid #8d8d8d;border-radius:4px;background:linear-gradient(#fefefe,#e2e0da)"></div>
<svg style="left:290px;top:846px" width="20" height="16" viewBox="290 846 20 16"><g fill="#000"><path d="M296,848 L299,848 L299,851 L300,851 L300,861 L293,861 L293,856 L295,851 L296,851 Z"/><path d="M305,848 L302,848 L302,851 L301,851 L301,861 L308,861 L308,856 L306,851 L305,851 Z"/><rect x="299" y="851.5" width="3" height="3.5"/></g><g fill="#fff"><rect x="297" y="849" width="1.2" height="1.5"/><rect x="303" y="849" width="1.2" height="1.5"/><rect x="295" y="853" width="1.2" height="2"/><rect x="298" y="853" width="1.2" height="2"/><rect x="302" y="853" width="1.2" height="2"/><rect x="305" y="853" width="1.2" height="2"/><rect x="294.5" y="857.5" width="1.2" height="2"/><rect x="305.5" y="857.5" width="1.2" height="2"/><rect x="300" y="855.5" width="1" height="5.5"/></g></svg>
<div class="t" style="left:287.5px;top:865px;font-size:12px;color:#111">查找</div>
<div style="left:1520px;top:821px;width:79px;height:70px;border:1px solid #6e6e6e;border-radius:4px;background:linear-gradient(#fcfcfc,#f0f0f0)"></div>
<svg style="left:1540px;top:830px" width="40" height="25" viewBox="1540 830 40 25"><rect x="1544.5" y="835.5" width="30" height="15.5" fill="#e8e8e8" stroke="#8a8a8a" stroke-width="1"/><rect x="1546" y="837" width="28" height="13" fill="#000"/><rect x="1545" y="850.8" width="30" height="1.7" fill="#000"/><path d="M1544.5,836 L1546.5,833.5 L1547,836 Z" fill="#8a8a8a"/><g fill="#fff"><rect x="1547" y="838.3" width="2" height="2"/><rect x="1550" y="838.3" width="2" height="2"/><rect x="1553" y="838.3" width="2" height="2"/><rect x="1556" y="838.3" width="2" height="2"/><rect x="1559" y="838.3" width="2" height="2"/><rect x="1562" y="838.3" width="2" height="2"/><rect x="1565" y="838.3" width="2" height="2"/><rect x="1568" y="838.3" width="2" height="2"/><rect x="1571" y="838.3" width="2" height="2"/><rect x="1547" y="841.3" width="4" height="2"/><rect x="1552" y="841.3" width="2" height="2"/><rect x="1555" y="841.3" width="2" height="2"/><rect x="1558" y="841.3" width="2" height="2"/><rect x="1561" y="841.3" width="2" height="2"/><rect x="1564" y="841.3" width="2" height="2"/><rect x="1567" y="841.3" width="2" height="2"/><rect x="1570" y="841.3" width="3" height="2"/><rect x="1547" y="844.3" width="2" height="2"/><rect x="1550" y="844.3" width="2" height="2"/><rect x="1553" y="844.3" width="2" height="2"/><rect x="1556" y="844.3" width="2" height="2"/><rect x="1559" y="844.3" width="2" height="2"/><rect x="1562" y="844.3" width="2" height="2"/><rect x="1565" y="844.3" width="2" height="2"/><rect x="1568" y="844.3" width="5" height="2"/><rect x="1547" y="847.3" width="4" height="2"/><rect x="1552" y="847.3" width="2" height="2"/><rect x="1555" y="847.3" width="11" height="2"/><rect x="1567" y="847.3" width="2" height="2"/><rect x="1570" y="847.3" width="3" height="2"/></g></svg>
<div style="left:0;top:880px;width:1600px;height:20px;background:#cc2946"></div>
<div class="t" style="left:20px;top:884px;font-size:12.5px;color:#fff">业务日期：2024/01/17</div>
<div class="t" style="left:186px;top:884px;font-size:12.5px;letter-spacing:0.4px;color:#fff">[0111 - zsy]</div>
<div class="t" style="left:261px;top:884px;font-size:12.5px;color:#fff">[实施一店]</div>
<div class="t" style="left:357px;top:884px;font-size:12.5px;color:#fff">版本号:9.2023.0101.081</div>
<div style="left:1385px;top:873px;width:213px;height:26px;background:#fff;border:1px solid #b7cde6;border-radius:0 2px 2px 0"></div>
<svg style="left:1368px;top:866px" width="232" height="34" viewBox="1368 866 232 34">
<defs><linearGradient id="sg" x1="0" y1="0" x2="0" y2="1"><stop offset="0" stop-color="#f3763a"/><stop offset="1" stop-color="#ec5416"/></linearGradient></defs>
<g transform="rotate(-16 1387.5 884)">
<rect x="1374.5" y="871" width="26" height="26" rx="3" fill="url(#sg)"/>
</g>
<path d="M1398.5,877.3 L1385,877.3 Q1379.6,877.3 1379.6,880.9 Q1379.6,884.3 1385,884.3 L1390.3,884.3 Q1395.4,884.3 1395.4,887.6 Q1395.4,891 1390.3,891 L1376.5,891" fill="none" stroke="#fff" stroke-width="4.8" transform="rotate(-16 1387.5 884)"/>
<g fill="#0a6ad6">
<path d="M1409.8,880.2 L1416,880.2 L1416,878.5 L1418,878.5 L1418,880.2 L1424,880.2 L1424,887.7 L1418,887.7 L1418,892.8 L1416,892.8 L1416,887.7 L1409.8,887.7 Z M1411.8,882 L1411.8,885.9 L1416,885.9 L1416,882 Z M1418,882 L1418,885.9 L1422,885.9 L1422,882 Z" fill-rule="evenodd"/>
<circle cx="1438.3" cy="883.5" r="1.9" fill="none" stroke="#0a6ad6" stroke-width="1.2"/>
<path d="M1444.5,885.5 Q1447.2,885 1447.2,887.5 Q1447.2,890 1443.8,892 L1443.2,891 Q1444.8,889.8 1444.8,888.8 Q1443.3,888.6 1443.3,887.2 Q1443.3,885.8 1444.5,885.5 Z"/>
<rect x="1462" y="878" width="6" height="11" rx="3"/>
<path d="M1460,885 Q1460,890.5 1465,890.5 Q1470,890.5 1470,885" fill="none" stroke="#0a6ad6" stroke-width="1.5"/>
<rect x="1464.3" y="890" width="1.4" height="2.5"/><rect x="1462.2" y="892.2" width="5.6" height="1.5" rx="0.7"/>
<rect x="1482" y="880" width="15" height="12" rx="1.5"/>
</g><g fill="#fff">
<rect x="1484" y="882" width="2" height="1.7"/><rect x="1487" y="882" width="2" height="1.7"/><rect x="1490" y="882" width="2" height="1.7"/><rect x="1493" y="882" width="2" height="1.7"/>
<rect x="1484" y="885" width="2" height="1.7"/><rect x="1487" y="885" width="2" height="1.7"/><rect x="1490" y="885" width="2" height="1.7"/><rect x="1493" y="885" width="2" height="1.7"/>
<rect x="1484" y="888" width="2" height="1.7"/><rect x="1488" y="888" width="7" height="1.7"/>
</g><g fill="#0a6ad6">
<path d="M1506,880.5 Q1506,879.2 1507.5,879.2 L1510.5,879.2 Q1511.5,881 1513.4,881 Q1515.3,881 1516.3,879.2 L1519.5,879.2 Q1521,879.2 1521,880.5 L1521,884 Q1521,885 1520,885 L1518.5,885 L1518.5,892.5 Q1518.5,893.8 1517.2,893.8 L1509.8,893.8 Q1508.5,893.8 1508.5,892.5 L1508.5,885 L1507,885 Q1506,885 1506,884 Z"/>
<path d="M1533,882 L1541,882 Q1545,882 1545,887.5 Q1545,893 1541,893 L1533,893 Q1529,893 1529,887.5 Q1529,882 1533,882 Z"/>
<rect x="1536.4" y="879.5" width="1.2" height="3"/>
<rect x="1555" y="879.9" width="5.6" height="5.6" rx="1.3"/><rect x="1555" y="887" width="5.6" height="5.6" rx="1.3"/><rect x="1562.2" y="887" width="5.6" height="5.6" rx="1.3"/>
<path d="M1563.5,879.9 L1566.5,879.9 Q1567.8,879.9 1567.8,881.2 L1567.8,884.2 Q1567.8,885.5 1566.5,885.5 L1563.5,885.5 Q1562.2,885.5 1562.2,884.2 L1562.2,881.2 Q1562.2,879.9 1563.5,879.9 Z M1564,881.7 L1564,883.7 L1566,883.7 L1566,881.7 Z" fill-rule="evenodd"/>
<path d="M1585.5,878.7 L1588,882.5 L1592.3,882.5 L1590.3,886.2 L1592.3,890 L1588,890 L1585.5,893.7 L1583,890 L1578.8,890 L1580.8,886.2 L1578.8,882.5 L1583,882.5 Z"/>
</g>
<g fill="#fff">
<rect x="1531.5" y="887" width="3.2" height="1.1"/><rect x="1532.55" y="885.9" width="1.1" height="3.3"/>
<circle cx="1539.8" cy="887.5" r="1.6"/>
<circle cx="1585.5" cy="886" r="1.7"/><rect x="1585" y="886" width="1" height="6"/>
</g>
<circle cx="1539.8" cy="887.5" r="0.7" fill="#0a6ad6"/>
</svg>

<div style="left:630px;top:363px;width:340px;height:173px;border:1px solid #111;border-radius:6px 6px 0 0;background:#f0f0f0;overflow:hidden">
  <div style="left:0;top:0;width:338px;height:1px;background:#fff"></div>
  <div style="left:0;top:1px;width:338px;height:23px;background:linear-gradient(#97b1cf,#b8d0ea)"></div>
  <div style="left:0;top:24px;width:3px;height:147px;background:#b8d0ea"></div>
  <div style="right:0;top:24px;width:3px;height:147px;background:linear-gradient(to right,#c4daf0 0%,#b8d0ea 55%,#5ccdf3 100%)"></div>
  <div style="left:0;bottom:0;width:338px;height:3px;background:linear-gradient(#c4daf0 0%,#b8d0ea 55%,#5ccdf3 100%)"></div>
</div>
<div class="t" style="left:637px;top:373px;font-size:10px;color:#111">安仕达软件</div>
<div style="left:934px;top:368px;width:31px;height:17px;border:1px solid #4a1a1a;border-radius:3px;background:linear-gradient(#e9a595 0%,#d8826d 45%,#bf3a1e 50%,#c9553a 80%,#e18c78 100%)"></div>
<svg style="left:934px;top:368px" width="31" height="17" viewBox="0 0 31 17"><path d="M12,5.6 L19,11.6 M19,5.6 L12,11.6" stroke="#3a3a50" stroke-width="4" stroke-linecap="round"/><path d="M12,5.6 L19,11.6 M19,5.6 L12,11.6" stroke="#fafafa" stroke-width="2.5" stroke-linecap="round"/></svg>
<div style="left:657px;top:426px;width:40px;height:40px;background:linear-gradient(#4a7bd6,#2d58b0);box-shadow:1px 1px 1px rgba(0,0,0,0.35)"></div>
<svg style="left:657px;top:426px" width="40" height="40" viewBox="0 0 40 40"><ellipse cx="20" cy="8" rx="4" ry="3.1" fill="#f4f4f4"/><path d="M14.5,15 L22.5,12.8 L22.5,31.5 L26,33.5 L26,35 L14,35 L14,33.5 L17.5,31.5 L17.5,17.2 L14.5,16.5 Z" fill="#f8f8f8"/></svg>
<div class="t" style="left:720px;top:426px;font-size:14px;color:#111">报废类型为空</div>
<div class="t" style="left:805px;top:424px;font-size:17px;font-weight:bold;color:#111">,</div>
<div class="t" style="left:818px;top:426px;font-size:14px;color:#111">不能生效</div>
<div class="t" style="left:876px;top:426px;font-size:14px;color:#111">!</div>
<div style="left:877px;top:487px;width:71px;height:33px;border:1px solid #707070;border-radius:3px;background:#f0f0f0"></div>
<div style="left:879px;top:489px;width:67px;height:29px;border:2px solid #7fb9f4;border-top-color:#cfe4fb;background:linear-gradient(#fdfdfd,#f0f0f0)"></div>
<div class="t" style="left:897px;top:497px;font-size:14.5px;color:#111">确定</div>

</body></html>
